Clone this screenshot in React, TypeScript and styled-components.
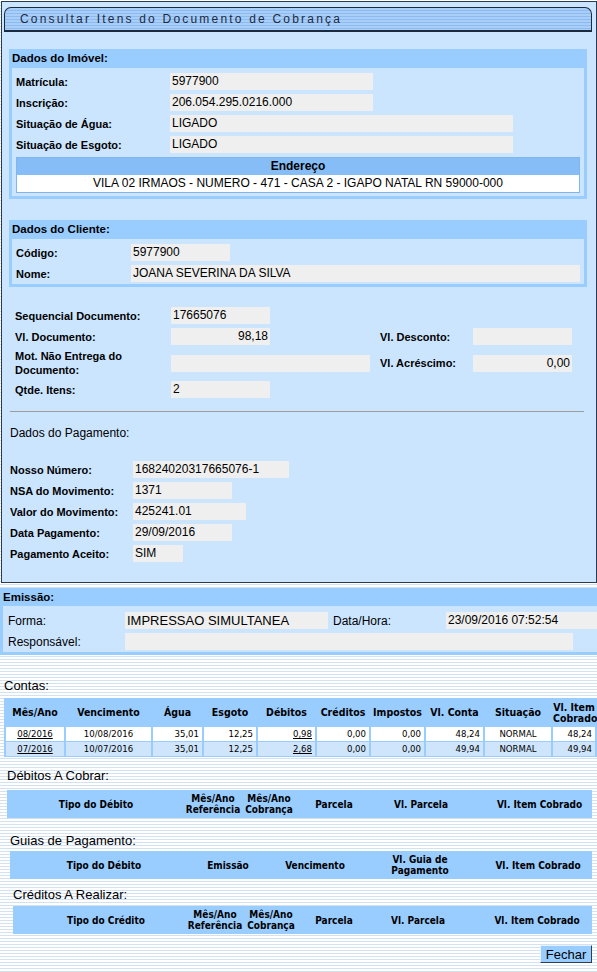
import React from 'react';
import styled, { createGlobalStyle } from 'styled-components';

const GlobalStyle = createGlobalStyle`
  html, body {
    margin: 0;
    padding: 0;
  }
  body {
    min-height: 972px;
    background: repeating-linear-gradient(
      to bottom,
      #ffffff 0,
      #ffffff 2px,
      #d3e1f1 2px,
      #d3e1f1 3px
    );
    font-family: "Liberation Sans", Arial, sans-serif;
    font-size: 12px;
    color: #000;
  }
`;

const Panel = styled.div`
  box-sizing: border-box;
  width: 596px;
  height: 582px;
  margin: 1px 0 0 1px;
  padding-top: 5px;
  background: #cce5ff;
  border: 1px solid #2b3b52;
  overflow: hidden;
`;

const TitleBar = styled.div`
  box-sizing: border-box;
  width: 588px;
  height: 25px;
  margin-left: 2px;
  padding-left: 15px;
  border: 1px solid #1c2a3e;
  border-bottom-width: 2px;
  border-radius: 7px 7px 0 0;
  background: repeating-linear-gradient(
    to bottom,
    #a9cff8 0,
    #a9cff8 2px,
    #8dbaf0 2px,
    #8dbaf0 3px
  );
  font-size: 12px;
  letter-spacing: 2.2px;
  line-height: 22px;
  color: #1b2a44;
`;

const Block = styled.div<{ $mt: number }>`
  box-sizing: border-box;
  width: 578px;
  margin: ${(p) => p.$mt}px 0 0 7px;
`;

const BlockHeader = styled.div<{ $h?: number }>`
  height: ${(p) => p.$h ?? 19}px;
  line-height: ${(p) => p.$h ?? 19}px;
  padding-left: 3px;
  background: #99ccff;
  font-size: 11.5px;
  font-weight: bold;
`;

const BlockBody = styled.div<{ $pb: number }>`
  border: 3px solid #99ccff;
  border-top: 0;
  padding: 5px 1px ${(p) => p.$pb}px 4px;
  display: flex;
  flex-direction: column;
  gap: 4px;
`;

const Row = styled.div`
  display: flex;
  align-items: center;
  height: 17px;
`;

const Label = styled.div<{ $w: number; $bold?: boolean; $size?: number }>`
  flex: none;
  width: ${(p) => p.$w}px;
  font-weight: ${(p) => (p.$bold === false ? 'normal' : 'bold')};
  font-size: ${(p) => p.$size ?? 11}px;
  line-height: 14px;
`;

const Field = styled.div<{ $w: number; $align?: string; $size?: number }>`
  flex: none;
  box-sizing: border-box;
  width: ${(p) => p.$w}px;
  height: 17px;
  padding: 0 2px;
  background: #efefef;
  font-size: ${(p) => p.$size ?? 12}px;
  line-height: 17px;
  text-align: ${(p) => p.$align ?? 'left'};
  white-space: nowrap;
  overflow: hidden;
`;

const AddressBox = styled.div`
  box-sizing: border-box;
  width: 564px;
  border: 1px solid #80b6f0;
`;

const AddressHeader = styled.div`
  height: 17px;
  line-height: 17px;
  background: #86bdf7;
  text-align: center;
  font-weight: bold;
  font-size: 12px;
`;

const AddressValue = styled.div`
  height: 17px;
  line-height: 17px;
  background: #ffffff;
  text-align: center;
  font-size: 12px;
`;

const DocGrid = styled.div`
  display: grid;
  grid-template-columns: 156px 202px 100px 99px;
  grid-template-rows: 17px 17px 28px 17px;
  row-gap: 4px;
  align-items: center;
  margin: 20px 0 0 13px;
`;

const GridLabel = styled.div<{ $pl?: number }>`
  padding-left: ${(p) => p.$pl ?? 0}px;
  font-weight: bold;
  font-size: 11px;
  line-height: 14px;
`;

const Divider = styled.div`
  width: 574px;
  margin: 13px 0 0 8px;
  border-top: 1px solid #9c9c9c;
`;

const SubTitle = styled.div<{ $mt: number; $pl: number; $size?: number }>`
  margin-top: ${(p) => p.$mt}px;
  padding-left: ${(p) => p.$pl}px;
  font-size: ${(p) => p.$size ?? 12}px;
  line-height: 14px;
`;

const PayList = styled.div`
  display: flex;
  flex-direction: column;
  gap: 4px;
  margin: 21px 0 0 8px;
`;

const Emission = styled.div`
  margin-top: 5px;
`;

const EmissionBody = styled.div`
  display: flex;
  flex-direction: column;
  gap: 4px;
  border-left: 3px solid #99ccff;
  border-bottom: 3px solid #99ccff;
  padding: 6px 0 2px 5px;
  background: #cce5ff;
`;

const Accounts = styled.table`
  width: 593px;
  margin: 5px 0 0 4px;
  background: #99ccff;
  border-spacing: 2px 1px;
  table-layout: fixed;
  font-family: "DejaVu Sans Condensed", "DejaVu Sans", Verdana, sans-serif;
`;

const Th = styled.th`
  height: 27px;
  padding: 0;
  font-size: 10.5px;
  font-weight: bold;
  line-height: 11px;
  text-align: center;
  vertical-align: middle;
`;

const Td = styled.td<{ $align: string; $alt: boolean }>`
  height: 14px;
  padding: 0 3px;
  background: ${(p) => (p.$alt ? '#cfe5fc' : '#ffffff')};
  font-size: 9.5px;
  line-height: 14px;
  text-align: ${(p) => p.$align};
  white-space: nowrap;
  overflow: hidden;
`;

const LinkText = styled.span`
  text-decoration: underline;
`;

const HeaderBar = styled.div<{ $mt: number; $ml: number; $h: number }>`
  display: flex;
  align-items: center;
  width: ${(p) => 592 - p.$ml}px;
  height: ${(p) => p.$h}px;
  margin: ${(p) => p.$mt}px 0 0 ${(p) => p.$ml}px;
  background: #99ccff;
  font-family: "DejaVu Sans Condensed", "DejaVu Sans", Verdana, sans-serif;
`;

const HeadCell = styled.div<{ $w: number; $pl?: number }>`
  flex: none;
  box-sizing: border-box;
  width: ${(p) => p.$w}px;
  padding-left: ${(p) => p.$pl ?? 0}px;
  font-size: 10px;
  font-weight: bold;
  line-height: 11px;
  text-align: center;
`;

const Footer = styled.div`
  display: flex;
  justify-content: flex-end;
  width: 592px;
  margin-top: 11px;
`;

const CloseButton = styled.button`
  box-sizing: border-box;
  width: 52px;
  height: 18px;
  padding: 0;
  background: #99ccff;
  border: 1px solid;
  border-color: #e8f2ff #2d3d55 #2d3d55 #e8f2ff;
  font-family: "Liberation Sans", Arial, sans-serif;
  font-size: 13px;
  line-height: 15px;
  color: #000;
`;

type Conta = {
  mes: string;
  venc: string;
  agua: string;
  esgoto: string;
  deb: string;
  cred: string;
  imp: string;
  conta: string;
  sit: string;
  item: string;
};

const contas: Conta[] = [
  { mes: '08/2016', venc: '10/08/2016', agua: '35,01', esgoto: '12,25', deb: '0,98', cred: '0,00', imp: '0,00', conta: '48,24', sit: 'NORMAL', item: '48,24' },
  { mes: '07/2016', venc: '10/07/2016', agua: '35,01', esgoto: '12,25', deb: '2,68', cred: '0,00', imp: '0,00', conta: '49,94', sit: 'NORMAL', item: '49,94' },
];

const colWidths = [58, 85, 49, 52, 57, 52, 53, 57, 66, 42];

type Head = { text: React.ReactNode; w: number; pl?: number };

const debitosHeads: Head[] = [
  { text: 'Tipo do Débito', w: 178 },
  { text: <>Mês/Ano<br />Referência</>, w: 56 },
  { text: <>Mês/Ano<br />Cobrança</>, w: 56 },
  { text: 'Parcela', w: 74 },
  { text: 'Vl. Parcela', w: 100 },
  { text: 'Vl. Item Cobrado', w: 121, pl: 16 },
];

const guiasHeads: Head[] = [
  { text: 'Tipo do Débito', w: 188 },
  { text: 'Emissão', w: 60 },
  { text: 'Vencimento', w: 114 },
  { text: <>Vl. Guia de<br />Pagamento</>, w: 96 },
  { text: 'Vl. Item Cobrado', w: 124, pl: 16 },
];

const creditosHeads: Head[] = [
  { text: 'Tipo do Crédito', w: 174, pl: 12 },
  { text: <>Mês/Ano<br />Referência</>, w: 56 },
  { text: <>Mês/Ano<br />Cobrança</>, w: 56 },
  { text: 'Parcela', w: 70 },
  { text: 'Vl. Parcela', w: 98 },
  { text: 'Vl. Item Cobrado', w: 125, pl: 15 },
];

const renderHeads = (heads: Head[]) =>
  heads.map((h, i) => (
    <HeadCell key={i} $w={h.w} $pl={h.pl}>
      {h.text}
    </HeadCell>
  ));

const App = () => {
  return (
    <>
      <GlobalStyle />
      <Panel>
        <TitleBar>Consultar Itens do Documento de Cobrança</TitleBar>

        <Block $mt={17}>
          <BlockHeader>Dados do Imóvel:</BlockHeader>
          <BlockBody $pb={3}>
            <Row>
              <Label $w={154}>Matrícula:</Label>
              <Field $w={203}>5977900</Field>
            </Row>
            <Row>
              <Label $w={154}>Inscrição:</Label>
              <Field $w={203}>206.054.295.0216.000</Field>
            </Row>
            <Row>
              <Label $w={154}>Situação de Água:</Label>
              <Field $w={343}>LIGADO</Field>
            </Row>
            <Row>
              <Label $w={154}>Situação de Esgoto:</Label>
              <Field $w={343}>LIGADO</Field>
            </Row>
            <AddressBox>
              <AddressHeader>Endereço</AddressHeader>
              <AddressValue>VILA 02 IRMAOS - NUMERO - 471 - CASA 2 - IGAPO NATAL RN 59000-000</AddressValue>
            </AddressBox>
          </BlockBody>
        </Block>

        <Block $mt={21}>
          <BlockHeader>Dados do Cliente:</BlockHeader>
          <BlockBody $pb={2}>
            <Row>
              <Label $w={115}>Código:</Label>
              <Field $w={99}>5977900</Field>
            </Row>
            <Row>
              <Label $w={115}>Nome:</Label>
              <Field $w={449}>JOANA SEVERINA DA SILVA</Field>
            </Row>
          </BlockBody>
        </Block>

        <DocGrid>
          <GridLabel>Sequencial Documento:</GridLabel>
          <Field $w={99}>17665076</Field>
          <span />
          <span />

          <GridLabel>Vl. Documento:</GridLabel>
          <Field $w={99} $align="right">98,18</Field>
          <GridLabel $pl={7}>Vl. Desconto:</GridLabel>
          <Field $w={99} $align="right" />

          <GridLabel>
            Mot. Não Entrega do
            <br />
            Documento:
          </GridLabel>
          <Field $w={199} />
          <GridLabel $pl={7}>Vl. Acréscimo:</GridLabel>
          <Field $w={99} $align="right">0,00</Field>

          <GridLabel>Qtde. Itens:</GridLabel>
          <Field $w={99}>2</Field>
          <span />
          <span />
        </DocGrid>

        <Divider />

        <SubTitle $mt={14} $pl={8}>Dados do Pagamento:</SubTitle>

        <PayList>
          <Row>
            <Label $w={123}>Nosso Número:</Label>
            <Field $w={156}>16824020317665076-1</Field>
          </Row>
          <Row>
            <Label $w={123}>NSA do Movimento:</Label>
            <Field $w={99}>1371</Field>
          </Row>
          <Row>
            <Label $w={123}>Valor do Movimento:</Label>
            <Field $w={113}>425241.01</Field>
          </Row>
          <Row>
            <Label $w={123}>Data Pagamento:</Label>
            <Field $w={99}>29/09/2016</Field>
          </Row>
          <Row>
            <Label $w={123}>Pagamento Aceito:</Label>
            <Field $w={50}>SIM</Field>
          </Row>
        </PayList>
      </Panel>

      <Emission>
        <BlockHeader $h={18}>Emissão:</BlockHeader>
        <EmissionBody>
          <Row>
            <Label $w={117} $bold={false} $size={12}>Forma:</Label>
            <Field $w={203} $size={13}>IMPRESSAO SIMULTANEA</Field>
            <Label $w={113} $bold={false} $size={12} style={{ marginLeft: 5 }}>Data/Hora:</Label>
            <Field $w={151}>23/09/2016 07:52:54</Field>
          </Row>
          <Row>
            <Label $w={117} $bold={false} $size={12}>Responsável:</Label>
            <Field $w={448} />
          </Row>
        </EmissionBody>
      </Emission>

      <SubTitle $mt={24} $pl={4} $size={13}>Contas:</SubTitle>
      <Accounts>
        <colgroup>
          {colWidths.map((w, i) => (
            <col key={i} style={{ width: w }} />
          ))}
        </colgroup>
        <thead>
          <tr>
            <Th>Mês/Ano</Th>
            <Th>Vencimento</Th>
            <Th>Água</Th>
            <Th>Esgoto</Th>
            <Th>Débitos</Th>
            <Th>Créditos</Th>
            <Th>Impostos</Th>
            <Th>Vl. Conta</Th>
            <Th>Situação</Th>
            <Th>
              Vl. Item
              <br />
              Cobrado
            </Th>
          </tr>
        </thead>
        <tbody>
          {contas.map((c, i) => {
            const alt = i % 2 === 1;
            return (
              <tr key={c.mes}>
                <Td $align="center" $alt={alt}><LinkText>{c.mes}</LinkText></Td>
                <Td $align="center" $alt={alt}>{c.venc}</Td>
                <Td $align="right" $alt={alt}>{c.agua}</Td>
                <Td $align="right" $alt={alt}>{c.esgoto}</Td>
                <Td $align="right" $alt={alt}><LinkText>{c.deb}</LinkText></Td>
                <Td $align="right" $alt={alt}>{c.cred}</Td>
                <Td $align="right" $alt={alt}>{c.imp}</Td>
                <Td $align="right" $alt={alt}>{c.conta}</Td>
                <Td $align="center" $alt={alt}>{c.sit}</Td>
                <Td $align="right" $alt={alt}>{c.item}</Td>
              </tr>
            );
          })}
        </tbody>
      </Accounts>

      <SubTitle $mt={12} $pl={7} $size={13}>Débitos A Cobrar:</SubTitle>
      <HeaderBar $mt={7} $ml={7} $h={28}>{renderHeads(debitosHeads)}</HeaderBar>

      <SubTitle $mt={16} $pl={10} $size={13}>Guias de Pagamento:</SubTitle>
      <HeaderBar $mt={3} $ml={10} $h={28}>{renderHeads(guiasHeads)}</HeaderBar>

      <SubTitle $mt={9} $pl={13} $size={13}>Créditos A Realizar:</SubTitle>
      <HeaderBar $mt={4} $ml={13} $h={28}>{renderHeads(creditosHeads)}</HeaderBar>

      <Footer>
        <CloseButton type="button">Fechar</CloseButton>
      </Footer>
    </>
  );
};

export default App;
